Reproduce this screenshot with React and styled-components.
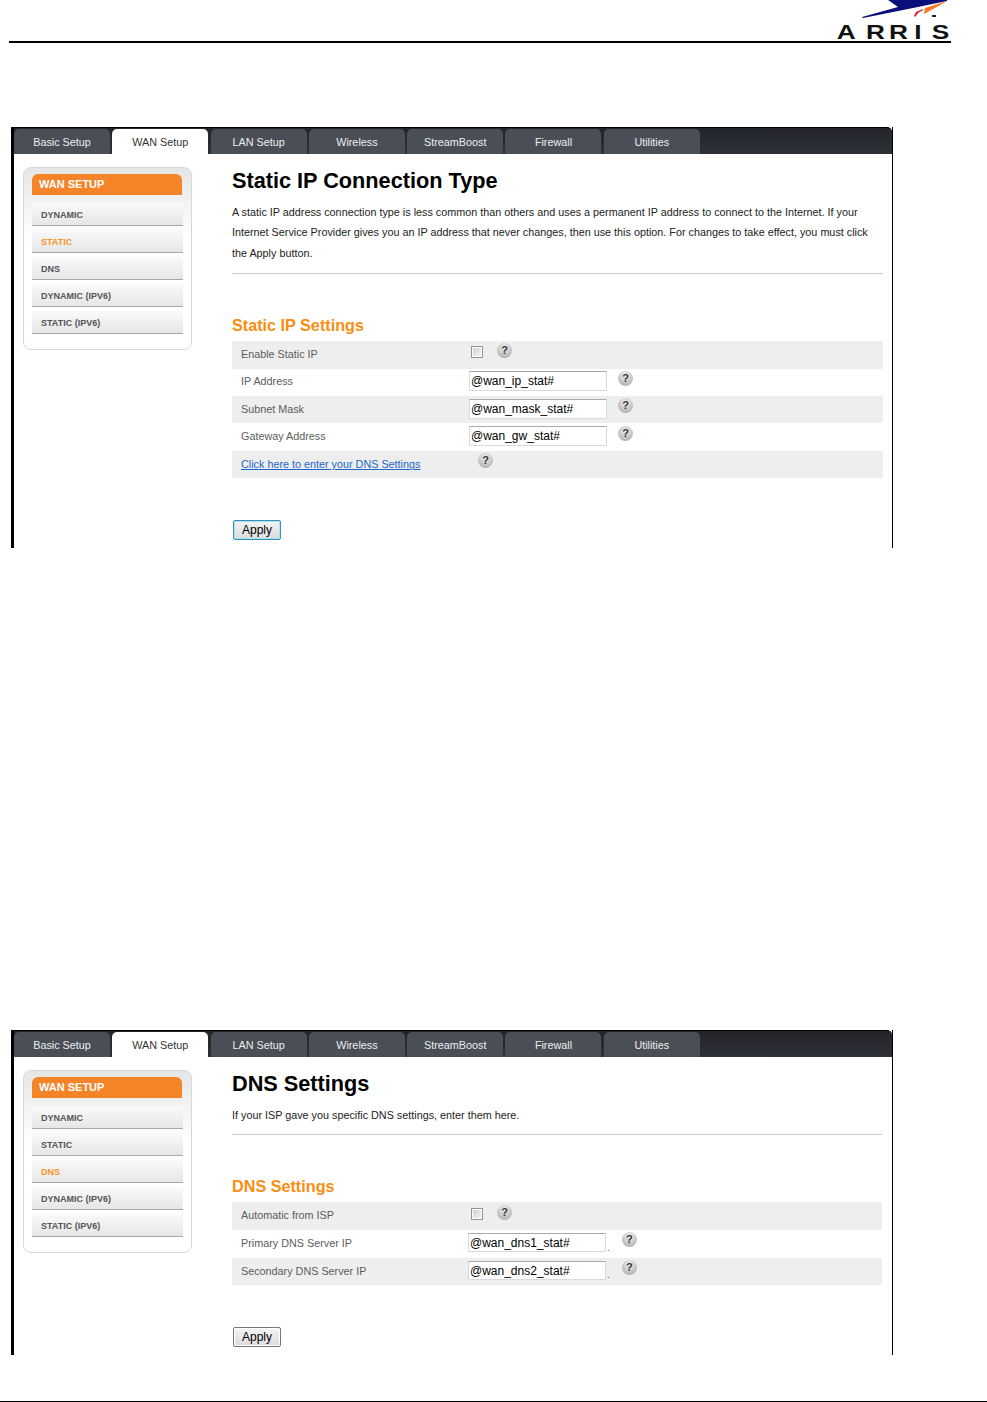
import React from "react";
import styled, { createGlobalStyle } from "styled-components";

const tabs = ["Basic Setup", "WAN Setup", "LAN Setup", "Wireless", "StreamBoost", "Firewall", "Utilities"];
const sideItems = ["DYNAMIC", "STATIC", "DNS", "DYNAMIC (IPV6)", "STATIC (IPV6)"];

const GlobalStyle = createGlobalStyle`
  html, body {
    margin: 0;
    padding: 0;
    background: #fff;
    font-family: "Liberation Sans", Arial, sans-serif;
  }
`;

const Page = styled.div`
  width: 987px;
  height: 1402px;
  position: relative;
  overflow: hidden;
  display: flex;
  flex-direction: column;
`;

const Header = styled.header`
  height: 41px;
  margin: 0 36px 0 9px;
  border-bottom: 2px solid #000;
  display: flex;
  justify-content: flex-end;
  flex-shrink: 0;
`;

const LogoBox = styled.svg`
  width: 116px;
  height: 41px;
  display: block;
`;

const Panel = styled.section`
  margin-left: 11px;
  width: 882px;
  height: ${(p) => p.$height}px;
  margin-top: ${(p) => p.$top}px;
  box-sizing: border-box;
  border-left: 3px solid #000;
  border-right: 1px solid #000;
  overflow: hidden;
  flex-shrink: 0;
`;

const TabBar = styled.nav`
  height: 27px;
  box-sizing: border-box;
  padding: 1px 0 0 0;
  background: linear-gradient(#22242a, #2e3137);
  border-top: 1px solid #000;
  border-top-right-radius: 5px;
  display: flex;
  gap: 2.3px;
`;

const Tab = styled.div`
  width: 96px;
  border-radius: 5px 5px 0 0;
  background: ${(p) => (p.$active ? "#fff" : "#4a4e57")};
  color: ${(p) => (p.$active ? "#333" : "#eceef0")};
  font-size: 10.8px;
  line-height: 26px;
  text-align: center;
`;

const Body = styled.div`
  display: flex;
  align-items: flex-start;
  background: #fff;
`;

const Sidebar = styled.aside`
  width: 169px;
  height: 183px;
  box-sizing: border-box;
  margin: 13px 0 0 9px;
  padding: 6px 8px 0 8px;
  border: 1px solid #d8d8d8;
  border-radius: 8px;
  background: linear-gradient(#e6e6e6 0, #fff 70px);
  flex-shrink: 0;
`;

const SideHead = styled.div`
  width: 150px;
  height: 21px;
  border-radius: 6px 6px 0 0;
  background: #f58429;
  color: #fff;
  font-size: 11px;
  font-weight: bold;
  line-height: 21px;
  padding-left: 7px;
  box-sizing: border-box;
  margin-bottom: 8px;
`;

const SideItem = styled.div`
  width: 151px;
  height: 23px;
  box-sizing: border-box;
  margin-bottom: 4px;
  padding-left: 9px;
  border-bottom: 1px solid #a8a8a8;
  background: linear-gradient(#fafafa, #e6e6e6);
  color: ${(p) => (p.$active ? "#f8941f" : "#555")};
  font-size: 9px;
  font-weight: bold;
  line-height: 24px;
`;

const Content = styled.main`
  width: ${(p) => p.$width}px;
  margin-left: 40px;
  padding-top: 14px;
`;

const Title = styled.h1`
  margin: 0;
  color: #000;
  font-size: 21.7px;
  font-weight: bold;
  line-height: 26px;
`;

const Intro = styled.p`
  margin: 8px 0 0;
  color: #222;
  font-size: 10.8px;
  line-height: 20.4px;
`;

const Divider = styled.hr`
  margin: ${(p) => p.$top}px 0 0;
  border: 0;
  border-top: 1px solid #ccc;
`;

const SectionTitle = styled.h2`
  margin: 41px 0 6px;
  color: #f88e12;
  font-size: 16.2px;
  font-weight: bold;
  line-height: 20px;
`;

const Row = styled.div`
  height: ${(p) => p.$height}px;
  display: flex;
  align-items: center;
  background: ${(p) => (p.$shaded ? "#eeeeee" : "#fff")};
`;

const Label = styled.div`
  width: 237px;
  box-sizing: border-box;
  padding: 0 0 2px 9px;
  color: #5c5c5c;
  font-size: 10.8px;
  flex-shrink: 0;
`;

const LinkCell = styled.a`
  width: 237px;
  margin-left: 9px;
  color: #1b66c9;
  font-size: 10.8px;
  text-decoration: underline;
  flex-shrink: 0;
`;

const TextBox = styled.input`
  width: 138px;
  height: ${(p) => p.$boxHeight}px;
  margin: -2px 0 0 ${(p) => p.$nudge || 0}px;
  box-sizing: border-box;
  padding: 0 1px;
  border: 1px solid #d4dbe2;
  border-top-color: #aaa;
  background: #fff;
  color: #000;
  font-family: "Liberation Sans", Arial, sans-serif;
  font-size: 12px;
`;

const CheckBox = styled.span`
  width: 12px;
  height: 12px;
  margin-left: 2px;
  margin-top: -5px;
  box-sizing: border-box;
  border: 1px solid #959595;
  background: linear-gradient(135deg, #cfcfcf, #f6f6f6);
  box-shadow: inset 0 0 0 1px #fff;
`;

const Dot = styled.span`
  margin-left: 1px;
  color: #666;
  font-size: 10px;
  line-height: 20px;
  align-self: flex-end;
`;

const Help = styled.span`
  width: 15px;
  height: 15px;
  margin-left: ${(p) => p.$gap}px;
  margin-top: -8px;
  border-radius: 50%;
  background: radial-gradient(circle at 50% 30%, #f2f2f2, #adadad 85%);
  color: #333;
  font-size: 11px;
  font-weight: bold;
  line-height: 15px;
  text-align: center;
`;

const Actions = styled.div`
  margin-top: 42px;
  padding-left: 1px;
`;

const ApplyButton = styled.button`
  width: 48px;
  height: 20px;
  padding: 0;
  border: 1px solid ${(p) => (p.$focused ? "#3a8fb5" : "#777")};
  border-radius: 2px;
  background: linear-gradient(#f4f4f4, #dcdcdc);
  box-shadow: ${(p) => (p.$focused ? "inset 0 0 0 1px #a8e0f4" : "inset 0 0 0 1px #fff")};
  color: #000;
  font-family: "Liberation Sans", Arial, sans-serif;
  font-size: 12px;
`;

const FooterLine = styled.div`
  position: absolute;
  left: 0;
  right: 0;
  bottom: 0;
  height: 1px;
  background: #000;
`;

function Logo() {
  return (
    <LogoBox viewBox="0 0 116 41">
      <polygon points="27,17 63,7 53,0 112,0 112,1 83,7 28,18" fill="#0b0f7c" />
      <polygon points="90,8 112,1 100,8 89,14" fill="#f47b20" />
      <polygon points="79,16 81,12 88,9 88,10 83,13 80,17" fill="#d9142b" />
      <rect x="97" y="15" width="4" height="2" fill="#222" />
      <text
        transform="scale(1.25 1)"
        x="1.5 24.8 43.2 63.5 77.5"
        y="39"
        fontFamily="Liberation Sans, Arial, sans-serif"
        fontWeight="bold"
        fontSize="21"
        fill="#111"
      >
        ARRIS
      </text>
    </LogoBox>
  );
}

function Frame({ top, height, activeItem, width, children }) {
  return (
    <Panel $top={top} $height={height}>
      <TabBar>
        {tabs.map((t) => (
          <Tab key={t} $active={t === "WAN Setup"}>
            {t}
          </Tab>
        ))}
      </TabBar>
      <Body>
        <Sidebar>
          <SideHead>WAN SETUP</SideHead>
          {sideItems.map((s) => (
            <SideItem key={s} $active={s === activeItem}>
              {s}
            </SideItem>
          ))}
        </Sidebar>
        <Content $width={width}>{children}</Content>
      </Body>
    </Panel>
  );
}

export default function App() {
  return (
    <Page>
      <GlobalStyle />
      <Header>
        <Logo />
      </Header>

      <Frame top={84} height={421} activeItem="STATIC" width={651}>
        <Title>Static IP Connection Type</Title>
        <Intro>
          A static IP address connection type is less common than others and uses a permanent IP address to connect to
          the Internet. If your Internet Service Provider gives you an IP address that never changes, then use this
          option. For changes to take effect, you must click the Apply button.
        </Intro>
        <Divider $top={10} />
        <SectionTitle>Static IP Settings</SectionTitle>
        <Row $shaded $height={27.4}>
          <Label>Enable Static IP</Label>
          <CheckBox />
          <Help $gap={14}>?</Help>
        </Row>
        <Row $height={27.4}>
          <Label>IP Address</Label>
          <TextBox readOnly value="@wan_ip_stat#" $boxHeight={20} />
          <Help $gap={11}>?</Help>
        </Row>
        <Row $shaded $height={27.4}>
          <Label>Subnet Mask</Label>
          <TextBox readOnly value="@wan_mask_stat#" $boxHeight={20} />
          <Help $gap={11}>?</Help>
        </Row>
        <Row $height={27.4}>
          <Label>Gateway Address</Label>
          <TextBox readOnly value="@wan_gw_stat#" $boxHeight={20} />
          <Help $gap={11}>?</Help>
        </Row>
        <Row $shaded $height={27.4}>
          <LinkCell>Click here to enter your DNS Settings</LinkCell>
          <Help $gap={0}>?</Help>
        </Row>
        <Actions>
          <ApplyButton $focused>Apply</ApplyButton>
        </Actions>
      </Frame>

      <Frame top={482} height={325} activeItem="DNS" width={650}>
        <Title>DNS Settings</Title>
        <Intro>If your ISP gave you specific DNS settings, enter them here.</Intro>
        <Divider $top={9} />
        <SectionTitle>DNS Settings</SectionTitle>
        <Row $shaded $height={27.7}>
          <Label>Automatic from ISP</Label>
          <CheckBox />
          <Help $gap={14}>?</Help>
        </Row>
        <Row $height={27.7}>
          <Label>Primary DNS Server IP</Label>
          <TextBox readOnly value="@wan_dns1_stat#" $nudge={-1} $boxHeight={19} />
          <Dot>.</Dot>
          <Help $gap={12}>?</Help>
        </Row>
        <Row $shaded $height={27.7}>
          <Label>Secondary DNS Server IP</Label>
          <TextBox readOnly value="@wan_dns2_stat#" $nudge={-1} $boxHeight={19} />
          <Dot>.</Dot>
          <Help $gap={12}>?</Help>
        </Row>
        <Actions>
          <ApplyButton>Apply</ApplyButton>
        </Actions>
      </Frame>

      <FooterLine />
    </Page>
  );
}
